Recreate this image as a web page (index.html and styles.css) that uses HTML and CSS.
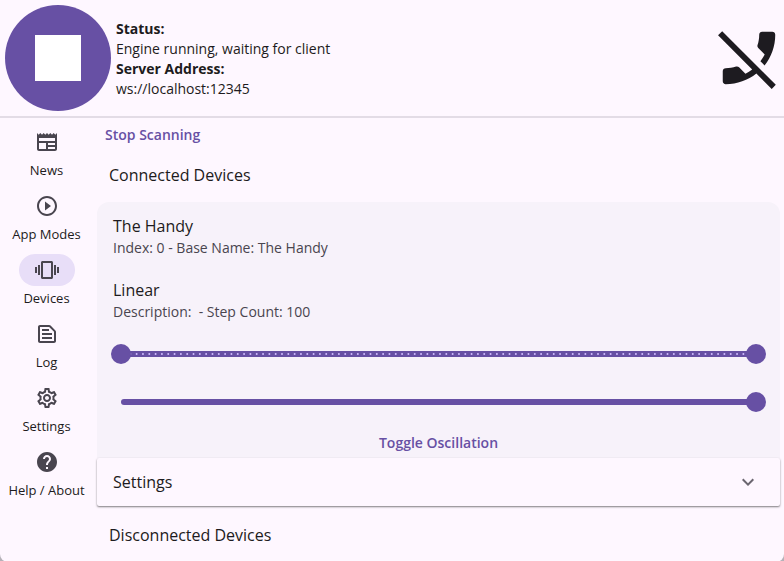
FILE: index.html
```
<!DOCTYPE html>
<html lang="en">
<head>
  <meta charset="UTF-8" />
  <meta name="viewport" content="width=device-width, initial-scale=1.0"/>
  <title>Devices</title>
  <link rel="stylesheet" href="styles.css">
</head>
<body>
  <div class="app">
    <header class="status-bar">
      <button class="engine-button" aria-label="Stop engine">
        <svg viewBox="0 0 24 24"><path d="M6 6h12v12H6z"/></svg>
      </button>
      <dl class="status">
        <dt>Status:</dt>
        <dd>Engine running, waiting for client</dd>
        <dt>Server Address:</dt>
        <dd>ws://localhost:12345</dd>
      </dl>
      <svg class="client-icon" viewBox="0 0 24 24"><path d="M17.34 14.54l-1.43-1.43c.56-.73 1.05-1.5 1.47-2.32l-2.2-2.2c-.28-.28-.38-.67-.25-1.02.37-1.12.57-2.32.57-3.57 0-.55.45-1 1-1H20c.55 0 1 .45 1 1 0 3.98-1.37 7.64-3.66 10.54zm-2.82 2.81C11.63 19.64 7.97 21 4 21c-.55 0-1-.45-1-1v-3.49c0-.55.45-1 1-1 1.24 0 2.45-.2 3.57-.57.35-.12.75-.03 1.02.24l2.2 2.2c.81-.42 1.58-.9 2.3-1.46L1.39 4.22l1.42-1.41L21.19 21.2l-1.41 1.41-5.26-5.26z"/></svg>
    </header>

    <div class="content">
      <nav class="rail">
        <a href="#news">
          <span class="rail-icon"><svg viewBox="0 0 24 24"><path d="M22 3l-1.67 1.67L18.67 3 17 4.67 15.33 3l-1.66 1.67L12 3l-1.67 1.67L8.67 3 7 4.67 5.33 3 3.67 4.67 2 3v16c0 1.1.9 2 2 2h16c1.1 0 2-.9 2-2V3zM11 19H4v-6h7v6zm9 0h-7v-2h7v2zm0-4h-7v-2h7v2zm0-4H4V8h16v3z"/></svg></span>
          News
        </a>
        <a href="#modes">
          <span class="rail-icon"><svg viewBox="0 0 24 24"><path d="M10 16.5l6-4.5-6-4.5v9zM12 2C6.48 2 2 6.48 2 12s4.48 10 10 10 10-4.48 10-10S17.52 2 12 2zm0 18c-4.41 0-8-3.59-8-8s3.59-8 8-8 8 3.59 8 8-3.59 8-8 8z"/></svg></span>
          App Modes
        </a>
        <a href="#devices" class="active">
          <span class="rail-icon"><svg viewBox="0 0 24 24"><path d="M0 15h2V9H0v6zm3 2h2V7H3v10zm19-8v6h2V9h-2zm-3 8h2V7h-2v10zM16.5 3h-9C6.67 3 6 3.67 6 4.5v15c0 .83.67 1.5 1.5 1.5h9c.83 0 1.5-.67 1.5-1.5v-15c0-.83-.67-1.5-1.5-1.5zM16 19H8V5h8v14z"/></svg></span>
          Devices
        </a>
        <a href="#log">
          <span class="rail-icon"><svg viewBox="0 0 24 24"><path d="M14.17 5L19 9.83V19H5V5h9.17m0-2H5c-1.1 0-2 .9-2 2v14c0 1.1.9 2 2 2h14c1.1 0 2-.9 2-2V9.83c0-.53-.21-1.04-.59-1.41l-4.83-4.83c-.37-.38-.88-.59-1.41-.59zM7 15h10v2H7v-2zm0-4h10v2H7v-2zm0-4h7v2H7V7z"/></svg></span>
          Log
        </a>
        <a href="#settings">
          <span class="rail-icon"><svg viewBox="0 0 24 24"><path d="M19.43 12.98c.04-.32.07-.64.07-.98 0-.34-.03-.66-.07-.98l2.11-1.65c.19-.15.24-.42.12-.64l-2-3.46c-.09-.16-.26-.25-.44-.25-.06 0-.12.01-.17.03l-2.49 1c-.52-.4-1.08-.73-1.69-.98l-.38-2.65C14.46 2.18 14.25 2 14 2h-4c-.25 0-.46.18-.49.42l-.38 2.65c-.61.25-1.17.59-1.69.98l-2.49-1c-.06-.02-.12-.03-.18-.03-.17 0-.34.09-.43.25l-2 3.46c-.13.22-.07.49.12.64l2.11 1.65c-.04.32-.07.65-.07.98 0 .33.03.66.07.98l-2.11 1.65c-.19.15-.24.42-.12.64l2 3.46c.09.16.26.25.44.25.06 0 .12-.01.17-.03l2.49-1c.52.4 1.08.73 1.69.98l.38 2.65c.03.24.24.42.49.42h4c.25 0 .46-.18.49-.42l.38-2.65c.61-.25 1.17-.59 1.69-.98l2.49 1c.06.02.12.03.18.03.17 0 .34-.09.43-.25l2-3.46c.12-.22.07-.49-.12-.64l-2.11-1.65zm-1.98-1.71c.04.31.05.52.05.73 0 .21-.02.43-.05.73l-.14 1.13.89.7 1.08.84-.7 1.21-1.27-.51-1.04-.42-.9.68c-.43.32-.84.56-1.25.73l-1.06.43-.16 1.13-.2 1.35h-1.4l-.19-1.35-.16-1.13-1.06-.43c-.43-.18-.83-.41-1.23-.71l-.91-.7-1.06.43-1.27.51-.7-1.21 1.08-.84.89-.7-.14-1.13c-.03-.31-.05-.54-.05-.74s.02-.43.05-.73l.14-1.13-.89-.7-1.08-.84.7-1.21 1.27.51 1.04.42.9-.68c.43-.32.84-.56 1.25-.73l1.06-.43.16-1.13.2-1.35h1.39l.19 1.35.16 1.13 1.06.43c.43.18.83.41 1.23.71l.91.7 1.06-.43 1.27-.51.7 1.21-1.07.85-.89.7.14 1.13zM12 8c-2.21 0-4 1.79-4 4s1.79 4 4 4 4-1.79 4-4-1.79-4-4-4zm0 6c-1.1 0-2-.9-2-2s.9-2 2-2 2 .9 2 2-.9 2-2 2z"/></svg></span>
          Settings
        </a>
        <a href="#help">
          <span class="rail-icon"><svg viewBox="0 0 24 24"><path d="M12 2C6.48 2 2 6.48 2 12s4.48 10 10 10 10-4.48 10-10S17.52 2 12 2zm1 17h-2v-2h2v2zm2.07-7.75l-.9.92C13.45 12.9 13 13.5 13 15h-2v-.5c0-1.1.45-2.1 1.17-2.83l1.24-1.26c.37-.36.59-.86.59-1.41 0-1.1-.9-2-2-2s-2 .9-2 2H8c0-2.21 1.79-4 4-4s4 1.79 4 4c0 .88-.36 1.68-.93 2.25z"/></svg></span>
          Help / About
        </a>
      </nav>

      <main>
        <button class="text-button">Stop Scanning</button>
        <h2>Connected Devices</h2>

        <section class="device">
          <div class="tile">
            <h3>The Handy</h3>
            <p>Index: 0 - Base Name: The Handy</p>
          </div>
          <div class="tile">
            <h3>Linear</h3>
            <p>Description: &nbsp;- Step Count: 100</p>
          </div>

          <div class="slider">
            <div class="track">
              <svg class="ticks"><line x1="3" y1="3" x2="100%" y2="3" pathLength="100"/></svg>
            </div>
            <input type="range" min="0" max="100" value="0" aria-label="Range start">
            <input type="range" min="0" max="100" value="100" aria-label="Range end">
          </div>
          <div class="slider">
            <div class="track"></div>
            <input type="range" min="0" max="100" value="100" aria-label="Speed">
          </div>

          <button class="text-button toggle">Toggle Oscillation</button>
        </section>

        <button class="panel" aria-expanded="false">
          Settings
          <svg viewBox="0 0 24 24"><path d="M16.59 8.59L12 13.17 7.41 8.59 6 10l6 6 6-6z"/></svg>
        </button>

        <h2>Disconnected Devices</h2>
      </main>
    </div>
  </div>
</body>
</html>
```
FILE: styles.css
```
* { box-sizing: border-box; }
html { background-color: #b5b1b8; }
body { margin: 0; font-family: "Open Sans", "Noto Sans", sans-serif; font-size: 14px; line-height: 20px; color: #1d1b20; }
h2, h3, p, dl, dd { margin: 0; }
h2, h3 { font-size: 16px; line-height: 24px; font-weight: 400; }
button { font-family: inherit; border: none; padding: 0; background: none; cursor: pointer; }
svg { display: block; fill: currentColor; }

.app { min-height: 100vh; background-color: #fef7ff; border-radius: 0 0 8px 8px; overflow: hidden; }

/* Header */
.status-bar { display: flex; align-items: center; gap: 5px; padding: 5px 0 5px 5px; border-bottom: 2px solid #e3dce6; }
.engine-button { display: grid; place-items: center; width: 106px; height: 106px; border-radius: 50%; background-color: #6750a4; color: #fff; }
.engine-button svg { width: 92px; height: 92px; }
.status { flex: 1; padding-top: 2px; }
.status dt { font-weight: 700; }
.client-icon { width: 70px; height: 70px; }

/* Layout */
.content { display: flex; }
.rail { display: flex; flex-direction: column; gap: 12px; width: 93px; padding-top: 8px; }
.rail a { display: flex; flex-direction: column; align-items: center; gap: 4px; color: #1d1b20; font-size: 13px; line-height: 16px; text-decoration: none; white-space: nowrap; }
.rail-icon { display: grid; place-items: center; width: 56px; height: 32px; border-radius: 16px; color: #49454f; }
.rail-icon svg { width: 24px; height: 24px; }
.rail .active .rail-icon { background-color: #e8def8; }
main { flex: 1; min-width: 0; padding: 0 4px; }
main h2 { padding: 11px 12px 15px; }
.panel + h2 { padding-top: 17px; }

.text-button { display: block; padding: 7px 8px; color: #6750a4; font-size: 14px; line-height: 20px; font-weight: 600; }

/* Device card */
.device { background-color: #f7f2fa; border-radius: 12px 12px 0 0; }
.tile { padding: 12px 16px 8px; }
.tile p { color: #49454f; }
.toggle { margin: 0 auto; padding: 7px 12px 5px; }

/* Sliders, both thumbs of a range share one track */
.slider { position: relative; height: 48px; margin: 0 14px; padding: 21px 10px; }
.track { height: 6px; border-radius: 3px; background-color: #6750a4; }
.ticks { width: 100%; height: 6px; }
.ticks line { stroke: #d0bcff; stroke-width: 2; stroke-linecap: round; stroke-dasharray: 0 1; }
.slider input { position: absolute; top: 0; left: 0; width: 100%; height: 48px; margin: 0; background: none; appearance: none; -webkit-appearance: none; pointer-events: none; }
.slider input::-webkit-slider-thumb { -webkit-appearance: none; width: 20px; height: 20px; border-radius: 50%; background-color: #6750a4; pointer-events: auto; }

/* Expansion panel */
.panel { display: flex; justify-content: space-between; align-items: center; width: 100%; height: 48px; padding: 0 20px 0 16px; border-radius: 2px; background-color: #fef7ff; color: #1d1b20; font-size: 16px; line-height: 24px; box-shadow: 0 1px 2px rgba(0, 0, 0, 0.5); }
.panel svg { width: 24px; height: 24px; color: #6b6670; }
```
